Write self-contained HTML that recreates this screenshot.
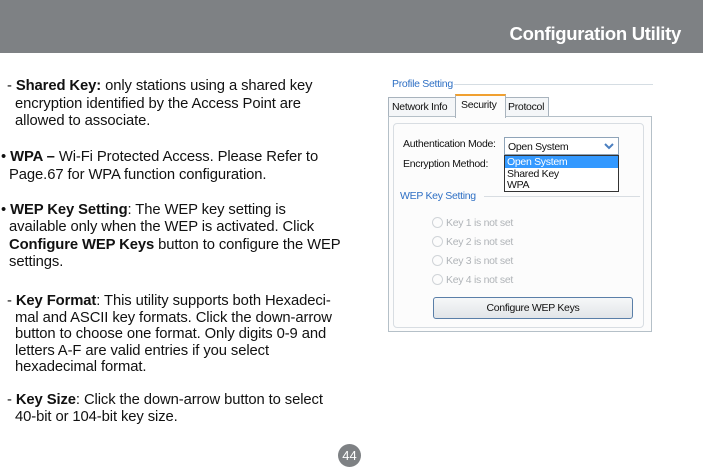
<!DOCTYPE html>
<html><head><meta charset="utf-8"><style>
*{margin:0;padding:0;box-sizing:border-box}
body{width:703px;height:464px;background:#fff;position:relative;overflow:hidden;font-family:"Liberation Sans",Arial,sans-serif;color:#111}
.hdr{position:absolute;left:0;top:0;width:703px;height:53px;background:#7e8184}
.hdr span{position:absolute;right:22px;top:23px;color:#fff;font-weight:bold;font-size:18.5px;letter-spacing:-0.3px}
.t{position:absolute;font-size:14.8px;line-height:17.5px;white-space:nowrap;letter-spacing:-0.1px}
.t b{font-weight:bold}
.p{position:absolute;font-family:"Liberation Sans",Arial,sans-serif;font-size:10.5px;white-space:nowrap;letter-spacing:-0.3px}
.num{position:absolute;left:338px;top:444px;width:23px;height:23px;border-radius:50%;background:#7e8184;color:#fff;font-size:13px;text-align:center;line-height:23px}
</style></head><body>
<div class="hdr"><span>Configuration Utility</span></div>

<div class="t" style="left:7px;top:78px">- <b>Shared Key:</b> only stations using a shared key<br>&nbsp;&nbsp;encryption identified by the Access Point are<br>&nbsp;&nbsp;allowed to associate.</div>
<div class="t" style="left:1px;top:149px">• <b>WPA –</b> Wi-Fi Protected Access. Please Refer to<br>&nbsp;&nbsp;Page.67 for WPA function configuration.</div>
<div class="t" style="left:1px;top:202px;line-height:17.3px">• <b>WEP Key Setting</b>: The WEP key setting is<br>&nbsp;&nbsp;available only when the WEP is activated. Click<br>&nbsp;&nbsp;<b>Configure WEP Keys</b> button to configure the WEP<br>&nbsp;&nbsp;settings.</div>
<div class="t" style="left:7px;top:293px;line-height:16.6px">- <b>Key Format</b>: This utility supports both Hexadeci-<br>&nbsp;&nbsp;mal and ASCII key formats. Click the down-arrow<br>&nbsp;&nbsp;button to choose one format. Only digits 0-9 and<br>&nbsp;&nbsp;letters A-F are valid entries if you select<br>&nbsp;&nbsp;hexadecimal format.</div>
<div class="t" style="left:7px;top:392px;line-height:17px">- <b>Key Size</b>: Click the down-arrow button to select<br>&nbsp;&nbsp;40-bit or 104-bit key size.</div>
<div class="num">44</div>

<div style="position:absolute;left:388px;top:78px;width:265px;height:254px;background:#fff">
  <div style="position:absolute;left:66px;top:6px;right:0;height:1px;background:#d5dde3"></div>
  <div class="p" style="left:4px;top:0;color:#2e6fc4">Profile Setting</div>
  <div style="position:absolute;left:0;top:19px;width:68px;height:20px;border:1px solid #a8b3bd;border-bottom:none;background:#f4f6f8"></div>
  <div class="p" style="left:4px;top:23px">Network Info</div>
  <div style="position:absolute;left:117px;top:19px;width:44px;height:20px;border:1px solid #a8b3bd;border-bottom:none;background:#f4f6f8"></div>
  <div class="p" style="left:120px;top:23px">Protocol</div>
  <div style="position:absolute;left:0;top:38px;width:264px;height:216px;border:1px solid #b5c0c8;background:#fcfcfc"></div>
  <div style="position:absolute;left:67px;top:16px;width:51px;height:24px;border:1px solid #a8b3bd;border-top:2px solid #f0a030;border-bottom:none;background:#fcfcfc"></div>
  <div class="p" style="left:73px;top:21px">Security</div>
  <div style="position:absolute;left:5px;top:45px;width:251px;height:205px;border:1px solid #d8dde2;border-radius:4px"></div>
  <div class="p" style="left:15px;top:60px">Authentication Mode:</div>
  <div class="p" style="left:15px;top:80px">Encryption Method:</div>
  <div style="position:absolute;left:116px;top:59px;width:115px;height:18px;border:1px solid #8fa4b8;background:#fff"></div>
  <div class="p" style="left:120px;top:63px">Open System</div>
  <svg style="position:absolute;left:214px;top:62px" width="14" height="12"><path d="M3 4 L7 8 L11 4" fill="none" stroke="#4b7fc0" stroke-width="2"/></svg>
  <div style="position:absolute;left:116px;top:77px;width:115px;height:37px;border:1px solid #333;background:#fff"></div>
  <div style="position:absolute;left:117px;top:78px;width:113px;height:12px;background:#3399ff"></div>
  <div class="p" style="left:119px;top:78px;color:#fff;line-height:12px">Open System</div>
  <div class="p" style="left:119px;top:90px;line-height:12px">Shared Key</div>
  <div class="p" style="left:119px;top:101px;line-height:12px">WPA</div>
  <div class="p" style="left:12px;top:112px;color:#2e6fc4;background:#fcfcfc;padding-right:2px">WEP Key Setting</div>
  <div style="position:absolute;left:96px;top:118px;width:156px;height:1px;background:#d8dde2"></div>
  <div style="position:absolute;left:44px;top:139px;width:11px;height:11px;border:1px solid #d0d4d8;border-radius:50%"></div>
  <div class="p" style="left:58px;top:139px;color:#b0b4b8">Key 1 is not set</div>
  <div style="position:absolute;left:44px;top:158px;width:11px;height:11px;border:1px solid #d0d4d8;border-radius:50%"></div>
  <div class="p" style="left:58px;top:158px;color:#b0b4b8">Key 2 is not set</div>
  <div style="position:absolute;left:44px;top:177px;width:11px;height:11px;border:1px solid #d0d4d8;border-radius:50%"></div>
  <div class="p" style="left:58px;top:177px;color:#b0b4b8">Key 3 is not set</div>
  <div style="position:absolute;left:44px;top:196px;width:11px;height:11px;border:1px solid #d0d4d8;border-radius:50%"></div>
  <div class="p" style="left:58px;top:196px;color:#b0b4b8">Key 4 is not set</div>
  <div style="position:absolute;left:45px;top:219px;width:200px;height:22px;border:1px solid #5a7fa8;border-radius:3px;background:linear-gradient(#f6f7f8,#e2e5e8);font-size:10.5px;text-align:center;line-height:20px;letter-spacing:-0.3px">Configure WEP Keys</div>
</div>
</body></html>
